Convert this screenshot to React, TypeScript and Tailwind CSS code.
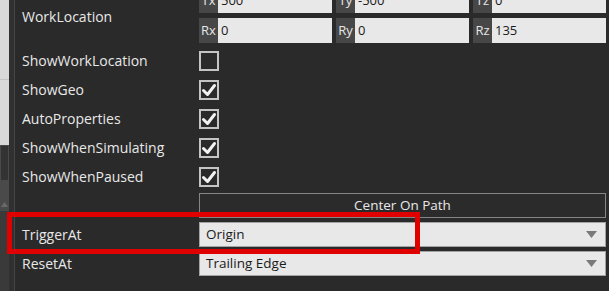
import React from "react";

const font = { fontFamily: '"Open Sans", "Noto Sans", Arial, sans-serif' };

function Check({ checked }: { checked: boolean }) {
    return (
        <div className="w-[20px] h-[20px] border-2 border-[#c4c4c4] bg-[#2a2a2a] flex items-center justify-center">
            {checked && (
                <svg width="16" height="16" viewBox="0 0 16 16">
                    <path d="M2.5 8.5 L6.5 12.5 L13.5 3.5" fill="none" stroke="#f2f2f2" strokeWidth="3" strokeLinecap="round" strokeLinejoin="round" />
                </svg>
            )}
        </div>
    );
}

function Field({ label, value }: { label: string; value: string }) {
    return (
        <div className="flex h-[25px]">
            <div className="w-[19px] bg-[#474747] text-[#e6e6e6] flex items-center justify-center text-[13px]">{label}</div>
            <div className="flex-1 bg-[#e8e8e8] text-[#1a1a1a] flex items-center pl-[3px] text-[13px]">{value}</div>
        </div>
    );
}

function Select({ value }: { value: string }) {
    return (
        <div className="h-[25px] w-full bg-[#e8e8e8] border border-[#a3a3a3] flex items-center justify-between pl-[6px] pr-[8px] text-[13.5px] text-[#1a1a1a]">
            <span>{value}</span>
            <svg width="11" height="7" viewBox="0 0 11 7"><path d="M0 0 H11 L5.5 7 Z" fill="#7a7a7a" /></svg>
        </div>
    );
}

function Row({ label, children }: { label: string; children: React.ReactNode }) {
    return (
        <div className="flex h-[29px] items-center">
            <div className="w-[184px] pl-[7px] text-[#e8e8e8] text-[14px]">{label}</div>
            <div className="flex-1 flex items-center">{children}</div>
        </div>
    );
}

export default function App() {
    return (
        <div className="relative w-[609px] h-[291px] overflow-hidden bg-[#2a2a2a] flex" style={font}>
            {/* scrollbar */}
            <div className="w-[9px] flex flex-col">
                <div className="h-[80px] bg-[#d9d9d9] border-b border-[#c4c4c4]" />
                <div className="h-[65px] bg-[#d9d9d9]" />
                <div className="h-[36px] bg-[#333333] border border-[#4a4a4a]" />
                <div className="h-[30px] bg-[#4a4a4a] flex items-end justify-center pb-[4px]">
                    <svg width="7" height="5" viewBox="0 0 7 5"><path d="M0 5 L3.5 0 L7 5 Z" fill="#6a6a6a" /></svg>
                </div>
                <div className="flex-1 bg-[#3a3a3a]" />
            </div>
            <div className="w-[5px] bg-[#303030]" />
            <div className="w-px bg-[#454545]" />

            <div className="flex-1 flex flex-col -mt-[14px] pr-[3px]">
                <div className="flex h-[60px] items-center">
                    <div className="w-[184px] pl-[7px] text-[#e8e8e8] text-[14px]">WorkLocation</div>
                    <div className="flex-1 flex flex-col gap-[5px] pt-[2px] pb-[3px]">
                        <div className="grid grid-cols-3 gap-[4px]">
                            <Field label="Tx" value="500" />
                            <Field label="Ty" value="-500" />
                            <Field label="Tz" value="0" />
                        </div>
                        <div className="grid grid-cols-3 gap-[4px]">
                            <Field label="Rx" value="0" />
                            <Field label="Ry" value="0" />
                            <Field label="Rz" value="135" />
                        </div>
                    </div>
                </div>
                <Row label="ShowWorkLocation"><Check checked={false} /></Row>
                <Row label="ShowGeo"><Check checked /></Row>
                <Row label="AutoProperties"><Check checked /></Row>
                <Row label="ShowWhenSimulating"><Check checked /></Row>
                <Row label="ShowWhenPaused"><Check checked /></Row>
                <div className="flex h-[29px] items-center">
                    <div className="w-[184px]" />
                    <button className="flex-1 h-[25px] border border-[#858585] bg-[#2b2b2b] text-[#e8e8e8] text-[13.5px] flex items-center justify-center">
                        Center On Path
                    </button>
                </div>
                <Row label="TriggerAt"><Select value="Origin" /></Row>
                <Row label="ResetAt"><Select value="Trailing Edge" /></Row>
            </div>

            {/* annotation */}
            <div className="absolute left-[7px] top-[212px] w-[413px] h-[42px] border-[5px] border-[#e00000]" />
        </div>
    );
}
